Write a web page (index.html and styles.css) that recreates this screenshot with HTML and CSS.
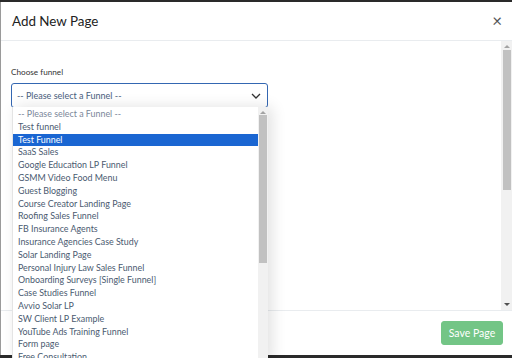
FILE: index.html
```html
<!DOCTYPE html>
<html>
    <head>
        <link rel="stylesheet" href="styles.css">
    </head>
 <body>
    <div class="modal">
        <div class="modal-header">
            <h1 class="title">Add New Page</h1>
            <span class="close">&times;</span>
        </div>
        <div class="modal-body">
            <div class="content">
                <label class="lbl">Choose funnel</label>
                <div class="select">
                    <span>-- Please select a Funnel --</span>
                    <svg class="chev" width="10" height="6" viewBox="0 0 10 6"><path d="M1 1l4 4 4-4" fill="none" stroke="#333" stroke-width="1.3"/></svg>
                </div>
            </div>
            <div class="vscroll">
                <span class="arr up"></span>
                <div class="thumb body-thumb"></div>
                <span class="arr down"></span>
            </div>
        </div>
        <div class="modal-footer">
            <button class="btn">Save Page</button>
        </div>
    </div>

    <div class="dropdown">
        <ul class="options">
            <li class="muted">-- Please select a Funnel --</li>
            <li>Test funnel</li>
            <li class="sel">Test Funnel</li>
            <li>SaaS Sales</li>
            <li>Google Education LP Funnel</li>
            <li>GSMM Video Food Menu</li>
            <li>Guest Blogging</li>
            <li>Course Creator Landing Page</li>
            <li>Roofing Sales Funnel</li>
            <li>FB Insurance Agents</li>
            <li>Insurance Agencies Case Study</li>
            <li>Solar Landing Page</li>
            <li>Personal Injury Law Sales Funnel</li>
            <li>Onboarding Surveys [Single Funnel]</li>
            <li>Case Studies Funnel</li>
            <li>Avvio Solar LP</li>
            <li>SW Client LP Example</li>
            <li>YouTube Ads Training Funnel</li>
            <li>Form page</li>
            <li>Free Consultation</li>
        </ul>
        <div class="vscroll small">
            <span class="arr up"></span>
            <div class="thumb list-thumb"></div>
            <span class="arr down"></span>
        </div>
    </div>
 </body>
</html>
```
FILE: styles.css
```css
html, body{
    margin: 0;
    height: 358px;
    overflow: hidden;
}
body{
    background-color: #2a2a2a;
    font-family: Lato, "Open Sans", sans-serif;
    padding-top: 2px;
    box-sizing: border-box;
}
.modal{
    display: flex;
    flex-direction: column;
    height: 353px;
    background-color: #ffffff;
    border-left: 1px solid #9a9a9a;
}
.modal-header{
    display: flex;
    align-items: center;
    justify-content: space-between;
    height: 38px;
    padding: 0 10px 0 11px;
    border-bottom: 1px solid #e9ecef;
}
.title{
    margin: 0;
    font-size: 13.4px;
    font-weight: 400;
    color: #222;
}
.close{
    font-size: 17px;
    color: #555;
    line-height: 1;
    margin-top: -2px;
}
.modal-body{
    display: flex;
    flex: 1;
}
.content{
    flex: 1;
    padding: 26px 0 0 10px;
}
.lbl{
    display: block;
    font-size: 8.2px;
    color: #333;
    margin-bottom: 6px;
}
.select{
    display: flex;
    align-items: center;
    justify-content: space-between;
    width: 257px;
    height: 25px;
    box-sizing: border-box;
    padding: 0 6px 0 5px;
    border: 1px solid #3467b2;
    border-radius: 3px;
    font-size: 9px;
    color: #4a5e7e;
}
.vscroll{
    width: 11px;
    background-color: #f1f1f1;
    display: flex;
    flex-direction: column;
    align-items: center;
}
.thumb{
    width: 8px;
    background-color: #c1c1c1;
}
.body-thumb{
    height: 140px;
    margin-top: 2px;
}
.list-thumb{
    height: 148px;
    margin-top: 1px;
}
.arr{
    width: 0;
    height: 0;
    border-left: 3px solid transparent;
    border-right: 3px solid transparent;
}
.arr.up{
    margin-top: 4px;
    border-bottom: 3px solid #a3a3a3;
}
.arr.down{
    margin-top: auto;
    margin-bottom: 4px;
    border-top: 3px solid #505050;
}
.modal-footer{
    display: flex;
    justify-content: flex-end;
    align-items: flex-start;
    height: 45px;
    padding: 10px 9px 0 0;
    border-top: 1px solid #e9ecef;
    box-sizing: border-box;
}
.btn{
    font-family: Lato, "Open Sans", sans-serif;
    font-size: 10.5px;
    height: 24px;
    width: 62px;
    color: #ffffff;
    background-color: #73c586;
    border: 1px solid #73c586;
    border-radius: 3px;
    padding: 0;
}
.dropdown{
    position: absolute;
    left: 12px;
    top: 107px;
    width: 255px;
    height: 256px;
    display: flex;
    background-color: #ffffff;
    box-shadow: 4px 0 14px rgba(0,0,0,0.12);
    border-left: 1px solid #e4e4e4;
}
.options{
    flex: 1;
    list-style: none;
    margin: 0;
    padding: 1px 0 0;
    font-size: 8.9px;
    color: #4a5a70;
}
.options li{
    height: 12.8px;
    line-height: 12.8px;
    padding-left: 5px;
    white-space: nowrap;
}
.options .muted{
    color: #7a8699;
}
.options .sel{
    background-color: #1a66d2;
    color: #ffffff;
}
.vscroll.small{
    width: 10px;
}
.small .arr.down{
    margin-bottom: 2px;
}
```
